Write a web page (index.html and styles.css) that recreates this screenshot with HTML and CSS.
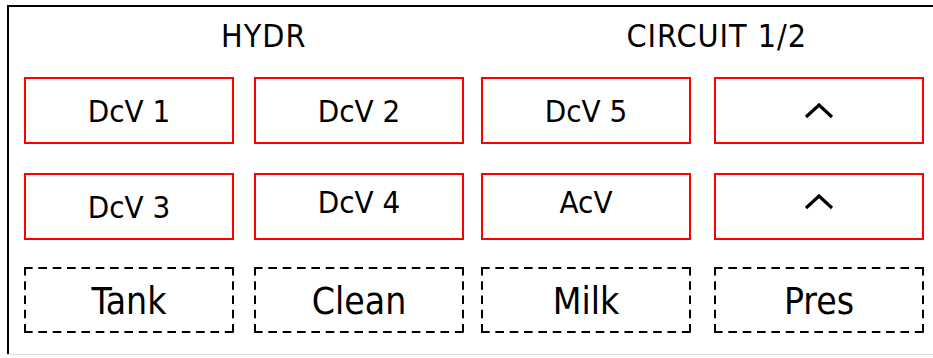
FILE: index.html
```html
<!DOCTYPE html>
<html>
<head>
<meta charset="utf-8">
<link rel="stylesheet" href="styles.css">
</head>
<body>
<div class="panel">
  <div class="header">
    <span class="title title-hydr">HYDR</span>
    <span class="title title-circuit">CIRCUIT 1/2</span>
  </div>
  <div class="grid">
    <div class="btn">DcV 1</div>
    <div class="btn">DcV 2</div>
    <div class="btn">DcV 5</div>
    <div class="btn"><svg class="chev" width="30" height="16" viewBox="0 0 30 16"><polyline points="2,14 15,2 28,14" fill="none" stroke="#000" stroke-width="3.2"/></svg></div>
    <div class="btn">DcV 3</div>
    <div class="btn btn-lift">DcV 4</div>
    <div class="btn btn-lift">AcV</div>
    <div class="btn btn-lift"><svg class="chev" width="30" height="16" viewBox="0 0 30 16"><polyline points="2,14 15,2 28,14" fill="none" stroke="#000" stroke-width="3.2"/></svg></div>
    <div class="tab">Tank</div>
    <div class="tab">Clean</div>
    <div class="tab">Milk</div>
    <div class="tab">Pres</div>
  </div>
</div>
</body>
</html>
```
FILE: styles.css
```css
html, body {
  margin: 0;
  padding: 0;
  background: #fff;
}
body {
  width: 933px;
  height: 358px;
  overflow: hidden;
  font-family: "DejaVu Sans Condensed", "DejaVu Sans", sans-serif;
  font-stretch: condensed;
  color: #000;
}
.panel {
  margin: 5px 0 0 7px;
  height: 347px;
  border-top: 2px solid #000;
  border-left: 2px solid #000;
  box-shadow: 0 1px 0 #dcdcdc;
}
.header {
  display: flex;
  padding-top: 11px;
  height: 36px;
  font-size: 32px;
  line-height: 36px;
  letter-spacing: 1px;
}
.title-hydr {
  margin-left: 212px;
}
.title-circuit {
  margin-left: 320px;
}
.grid {
  display: grid;
  grid-template-columns: 230px 227px 233px 209px;
  grid-template-rows: 96px 94px 66px;
  padding: 23px 0 0 15px;
}
.btn, .tab {
  width: 210px;
  box-sizing: border-box;
  display: flex;
  align-items: center;
  justify-content: center;
}
.btn {
  height: 67px;
  border: 2px solid #ff0000;
  font-size: 31px;
}
.btn-lift {
  padding-bottom: 10px;
}
.tab {
  height: 66px;
  font-size: 37px;
  padding-top: 2px;
  background-image:
    linear-gradient(to right, #000 9px, transparent 9px),
    linear-gradient(to right, #000 9px, transparent 9px),
    linear-gradient(to bottom, #000 9px, transparent 9px),
    linear-gradient(to bottom, #000 9px, transparent 9px);
  background-size: 14.357px 2px, 14.357px 2px, 2px 14.25px, 2px 14.25px;
  background-repeat: repeat-x, repeat-x, repeat-y, repeat-y;
  background-position: 0 0, 0 100%, 0 0, 100% 0;
}
.chev {
  display: block;
}
```
